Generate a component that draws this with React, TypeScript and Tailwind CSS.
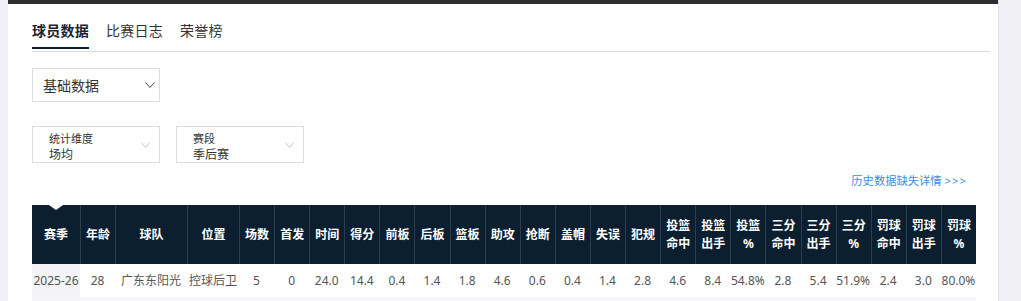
import React from 'react';

const headers: string[][] = [
  ['赛季'], ['年龄'], ['球队'], ['位置'], ['场数'], ['首发'], ['时间'], ['得分'], ['前板'], ['后板'],
  ['篮板'], ['助攻'], ['抢断'], ['盖帽'], ['失误'], ['犯规'], ['投篮', '命中'], ['投篮', '出手'], ['投篮', '%'],
  ['三分', '命中'], ['三分', '出手'], ['三分', '%'], ['罚球', '命中'], ['罚球', '出手'], ['罚球', '%'],
];

const row = [
  '2025-26', '28', '广东东阳光', '控球后卫', '5', '0', '24.0', '14.4', '0.4', '1.4', '1.8', '4.6', '0.6',
  '0.4', '1.4', '2.8', '4.6', '8.4', '54.8%', '2.8', '5.4', '51.9%', '2.4', '3.0', '80.0%',
];

const gridCols = 'grid grid-cols-[48px_35px_72px_52px_repeat(21,35.1px)]';

function Chevron({ className }: { className?: string }) {
  return (
    <svg viewBox="0 0 10 6" className={className} fill="none" stroke="currentColor" strokeWidth="1">
      <polyline points="0.5,0.5 5,5.5 9.5,0.5" />
    </svg>
  );
}

function Select({ label, value }: { label: string; value: string }) {
  return (
    <div className="relative w-[128px] h-[37px] border border-[#dcdcdc] pl-4 pt-[4px]">
      <div className="text-[11px] leading-[15px] text-[#333]">{label}</div>
      <div className="text-[12px] leading-[16px] text-[#333] mt-[1px]">{value}</div>
      <Chevron className="absolute right-[9px] top-[15px] w-[9px] h-[6px] text-[#bbb]" />
    </div>
  );
}

export default function App() {
  return (
    <div
      className="min-h-screen bg-[#f0f0f5] flex"
      style={{ fontFamily: '"Noto Sans", "Noto Sans CJK SC", sans-serif' }}
    >
      <div className="w-[8px] shrink-0" />
      <div className="w-[991px] shrink-0 bg-white border-r border-[#e0e0e3] h-[301px] overflow-hidden">
        <div className="h-1 bg-[#2e2e2e]" />
        <div className="pl-6 pr-2">
          {/* Tabs */}
          <div className="flex gap-[17px] border-b border-[#dcdcdc] h-[48px]">
            <div className="h-[47px] pt-[17px]">
              <div className="text-[14px] leading-[20px] font-bold text-[#1a2433] tracking-[0.25px]">球员数据</div>
              <div className="mt-[6px] h-[2px] bg-[#0c1f30]" />
            </div>
            <div className="h-[47px] pt-[17px] text-[14px] leading-[20px] text-[#333] tracking-[0.25px]">比赛日志</div>
            <div className="h-[47px] pt-[17px] text-[14px] leading-[20px] text-[#333] tracking-[0.25px]">荣誉榜</div>
          </div>

          {/* Data type dropdown */}
          <div className="mt-4 w-[128px] h-[34px] border border-[#dcdcdc] flex items-center justify-between pl-[10px] pr-[4px]">
            <span className="text-[14px] text-[#333]">基础数据</span>
            <Chevron className="w-[10px] h-[6px] text-[#444]" />
          </div>

          {/* Filters */}
          <div className="mt-6 flex gap-4">
            <Select label="统计维度" value="场均" />
            <Select label="赛段" value="季后赛" />
          </div>

          <div className="mt-[10px] flex justify-end pr-[23px]">
            <span className="text-[11.3px] leading-[16px] text-[#3a8ee6]">
              历史数据缺失详情 <span className="tracking-[1px]">&gt;&gt;&gt;</span>
            </span>
          </div>

          {/* Table */}
          <div className="mt-4 w-[944px]">
            <div className={`${gridCols} h-[59px] bg-[#0c1f30]`}>
              {headers.map((h, i) => (
                <div
                  key={i}
                  className={`relative flex flex-col items-center justify-center text-white font-bold text-[12px] leading-[18px] ${i > 0 ? 'border-l border-[#2b3d4f]' : ''}`}
                >
                  {i === 0 && (
                    <div className="absolute top-0 left-1/2 -translate-x-1/2 w-0 h-0 border-l-[7px] border-r-[7px] border-t-[5px] border-l-transparent border-r-transparent border-t-white" />
                  )}
                  {h.map((line, j) => (
                    <span key={j}>{line}</span>
                  ))}
                </div>
              ))}
            </div>
            <div className={`${gridCols} h-[33px]`}>
              {row.map((v, i) => (
                <div
                  key={i}
                  className={`flex items-center justify-center text-[12px] text-[#555] ${i === 0 ? 'bg-[#f3f3f6]' : ''}`}
                >
                  {v}
                </div>
              ))}
            </div>
            <div className="h-[10px] bg-[#f5f5f7]" />
          </div>
        </div>
      </div>
    </div>
  );
}
